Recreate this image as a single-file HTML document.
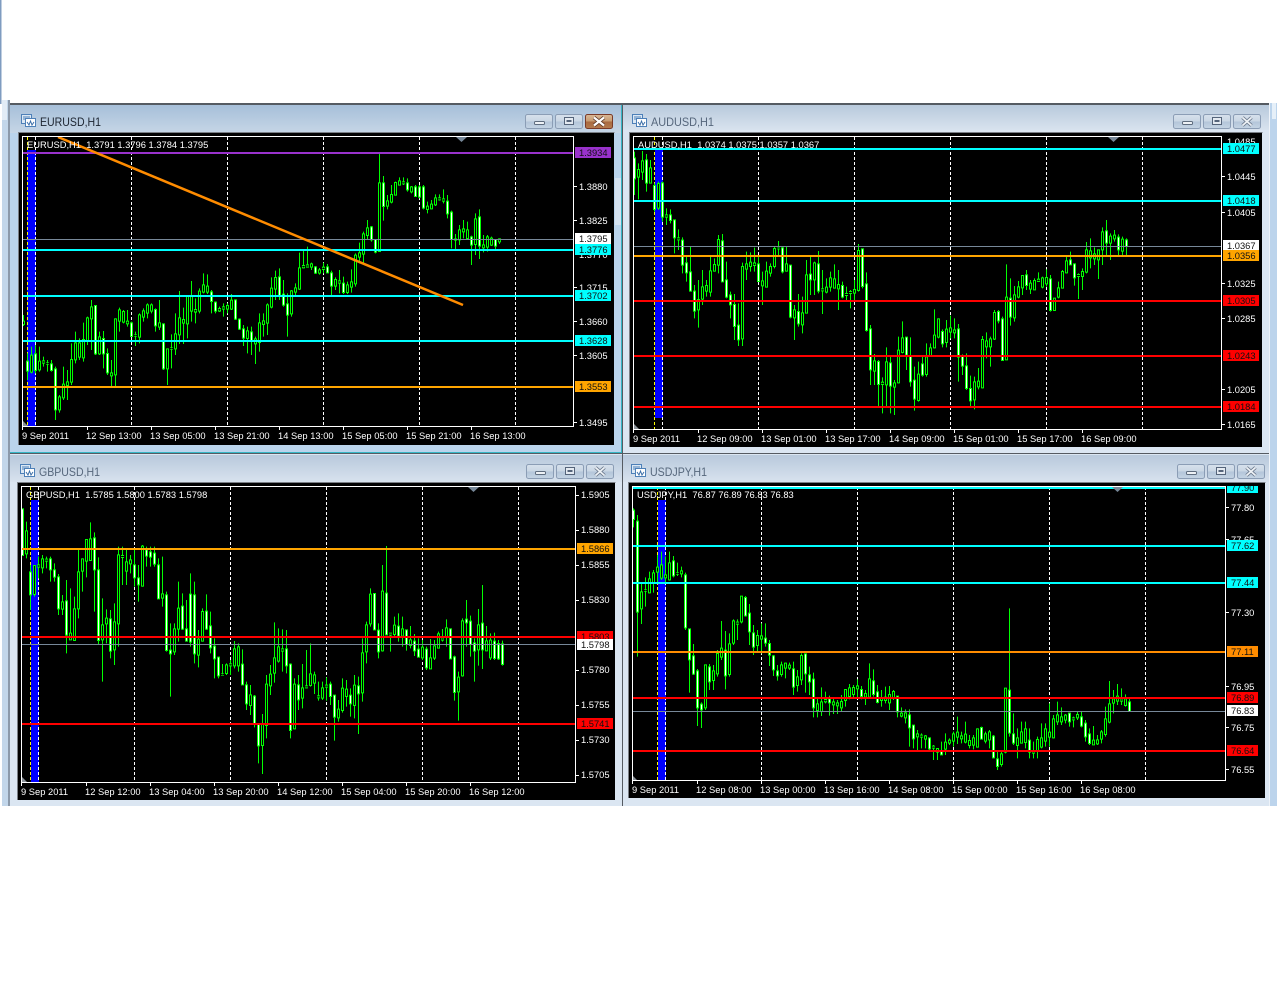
<!DOCTYPE html>
<html><head><meta charset="utf-8"><title>MT4 charts</title>
<style>
html,body{margin:0;padding:0;background:#fff;width:1278px;height:992px;overflow:hidden}
svg{display:block}
text{font-family:"Liberation Sans",Arial,sans-serif;font-size:9.35px;fill:#fff}
.t{font-size:12px;fill:#56677c}
.a{fill:#111}
.l{fill:#111}
.c{shape-rendering:crispEdges;fill:none}
</style></head><body>
<svg xmlns="http://www.w3.org/2000/svg" width="1278" height="992" viewBox="0 0 1278 992">
<defs>
<linearGradient id="ta" x1="0" y1="0" x2="0" y2="1"><stop offset="0" stop-color="#a6bfd9"/><stop offset="1" stop-color="#c6d6e6"/></linearGradient>
<linearGradient id="ti" x1="0" y1="0" x2="0" y2="1"><stop offset="0" stop-color="#b8c9dc"/><stop offset="1" stop-color="#d8e2ee"/></linearGradient>
<linearGradient id="bg" x1="0" y1="0" x2="0" y2="1"><stop offset="0" stop-color="#d7e1ec"/><stop offset=".5" stop-color="#c9d6e4"/><stop offset=".5" stop-color="#b3c5d9"/><stop offset="1" stop-color="#c5d4e4"/></linearGradient>
<linearGradient id="br" x1="0" y1="0" x2="0" y2="1"><stop offset="0" stop-color="#d9b998"/><stop offset=".5" stop-color="#c69a70"/><stop offset=".5" stop-color="#a8683f"/><stop offset="1" stop-color="#b47c50"/></linearGradient>
<g id="ic"><rect x=".5" y=".5" width="10" height="9" fill="#dce8f4" stroke="#4d80b8"/><path d="M2 3h7M2 5h7" stroke="#4d80b8"/><rect x="4.5" y="4.5" width="10" height="8" fill="#fff" stroke="#4d80b8"/><path d="M6 8l2 3 1.500-4 1.500 4 2-3" fill="none" stroke="#3a6ea8"/></g>
<g id="b1"><rect x=".5" y=".5" width="27" height="14" rx="2" fill="url(#bg)" stroke="#8b9db5"/><rect x="9.500" y="7.500" width="10" height="3" rx="1" fill="#eef2f6" stroke="#5e6c7e"/></g>
<g id="b2"><rect x=".5" y=".5" width="27" height="14" rx="2" fill="url(#bg)" stroke="#8b9db5"/><rect x="9.500" y="3.500" width="9" height="7" fill="#e4eaf1" stroke="#55647a"/><rect x="11.500" y="6" width="5" height="2" fill="#55647a"/></g>
<g id="b3"><rect x=".5" y=".5" width="27" height="14" rx="2" fill="url(#bg)" stroke="#8b9db5"/><path d="M9.500 3.500l9 8M18.500 3.500l-9 8" stroke="#6d7b8e" stroke-width="3.500"/><path d="M9.500 3.500l9 8M18.500 3.500l-9 8" stroke="#eef2f6" stroke-width="1.800"/></g>
<g id="b4"><rect x=".5" y=".5" width="27" height="14" rx="2" fill="url(#br)" stroke="#7a3a28"/><path d="M9 3.500l10 8M19 3.500l-10 8" stroke="#5e3a2a" stroke-width="3.800"/><path d="M9 3.500l10 8M19 3.500l-10 8" stroke="#fff" stroke-width="2.200"/></g>

<path id="e1w" d="M1 665V692M3 643V690M7 673V690M8 688V808M18 498V640M20 597V640M21 642V697M27 550V588M33 510V556M35 553V685M47 457V483M48 488V512M53 481V536M54 539V566M55 568V593M57 577V600M64 412V466M65 464V494M66 493V524M73 382V398M76 382V397M77 400V437M80 431V456M87 262V298M88 300V335M90 130V198M96 130V148M98 142V168M99 142V170M100 142V203M106 185V220M107 218V297M112 292V314M114 232V317M118 300V317"/>
<path id="e1b" d="M0 545V552M2 647V695M4 665V688M5 664V668M6 670V672M9 772V808M10 734V772M11 727V735M12 660V725M13 610V658M14 610V650M15 600V652M16 535V600M17 502V535M19 592V640M22 700V706M23 538V703M24 511V542M25 516V545M26 545V550M28 586V588M29 526V590M30 514V530M31 496V518M32 496V512M34 550V560M36 628V685M37 624V626M38 583V625M39 535V583M40 540V548M41 470V550M42 470V512M43 510V515M44 455V512M45 436V455M46 440V455M49 507V512M50 502V506M51 498V506M52 482V506M56 574V594M58 598V610M59 550V606M60 544V552M61 496V548M62 446V500M63 414V446M67 454V520M68 445V455M69 385V446M70 378V382M71 376V380M72 373V380M74 391V398M75 383V387M78 420V437M79 424V428M81 436V456M82 427V440M83 347V430M84 340V350M85 283V341M86 265V285M89 130V333M91 184V197M92 165V185M93 129V164M94 124V134M95 127V130M97 142V154M101 200V207M102 194V205M103 175V193M104 175V178M105 178V182M108 298V300M109 271V298M110 268V274M111 271V294M113 238V312M115 316V322M116 292V320M117 296V314M119 298V304"/>

<path id="a1w" d="M0 55V115M3 61V128M5 138V207M7 130V230M9 226V240M10 241V292M12 302V374M13 370V397M14 397V452M15 455V512M22 304V424M23 421V470M24 466V493M25 495V558M26 557V598M31 373V423M37 325V394M39 377V530M41 516V550M44 404V418M46 373V452M52 438V470M57 328V438M58 433V570M59 568V688M61 666V732M64 670V737M68 593V644M69 648V724M70 722V776M72 673V704M77 576V610M81 568V650M82 650V677M83 679V744M84 747V781M91 516V541M92 538V660M94 476V530M98 406V435M104 418V510M109 361V373M110 373V412M118 274V308M121 293V328M123 301V318"/>
<path id="a1b" d="M1 90V110M2 64V95M4 85V128M6 132V203M8 226V230M11 295V298M16 480V508M17 442V476M18 438V452M19 394V455M20 375V392M21 300V374M27 381V595M28 373V386M29 368V378M30 370V375M32 424V436M33 395V440M34 381V398M35 327V378M36 323V325M38 373V392M40 511V532M42 520V553M43 406V518M45 370V418M47 448V451M48 443V455M49 415V440M50 418V443M51 435V445M53 462V465M54 456V459M55 450V458M56 333V450M60 664V692M62 728V732M63 667V733M65 730V740M66 632V727M67 595V636M71 704V780M73 652V702M74 625V645M75 587V622M76 538V590M78 569V606M79 565V575M80 571V577M85 727V778M86 725V739M87 600V742M88 604V619M89 598V619M90 519V596M93 473V658M95 466V532M96 442V470M97 408V442M99 431V446M100 423V448M101 419V423M102 415V440M103 414V430M105 476V510M106 445V470M107 396V443M108 364V397M111 405V408M112 396V408M113 331V395M114 334V352M115 343V355M116 331V358M117 277V328M119 290V308M120 287V295M122 299V332"/>

<path id="g1w" d="M0 58V195M2 247V313M7 208V238M8 241V260M9 262V355M11 334V434M18 145V238M19 241V450M22 388V482M28 226V262M29 265V283M31 181V197M32 187V200M33 191V221M34 226V325M36 316V480M37 482V490M40 350V416M41 418V452M42 314V455M43 316V490M46 365V416M47 409V472M48 470V505M49 503V556M55 524V583M56 586V640M58 620V700M59 705V766M66 478V526M67 524V720M69 586V628M77 584V618M78 617V680M82 617V640M84 589V610M88 312V418M89 422V484M91 311V433M94 410V437M96 421V462M98 455V481M99 479V500M101 479V532M107 418V505M108 502V606M111 389V397M112 395V462M113 460V482M115 401V478M118 455V504M119 462V505M120 463V522"/>
<path id="g1b" d="M1 124V190M3 228V312M4 226V230M5 208V232M6 209V212M10 337V356M12 431V448M13 358V450M14 247V355M15 208V242M16 150V212M17 148V210M20 406V448M21 386V400M23 397V478M24 196V400M25 198V201M26 217V242M27 211V220M30 170V287M35 313V323M38 418V484M39 356V416M44 449V494M45 366V452M50 553V555M51 526V549M52 523V526M53 478V526M54 472V526M57 616V645M60 705V765M61 584V705M62 554V586M63 505V548M64 472V512M65 478V482M68 584V715M70 595V623M71 589V592M72 553V585M73 556V578M74 619V622M75 595V623M76 587V590M79 659V682M80 596V660M81 599V618M83 587V645M85 490V607M86 406V484M87 314V400M90 305V481M92 431V434M93 407V432M95 418V437M97 451V465M100 473V502M102 505V535M103 469V503M104 433V473M105 445V449M106 415V440M109 563V604M110 394V556M114 406V478M116 454V481M117 452V502"/>

<path id="j1w" d="M0 62V87M1 95V365M10 214V256M13 256V412M14 418V508M15 499V551M16 544V652M17 644V658M19 532V574M23 482V556M28 324V376M29 371V424M30 430V470M33 446V458M34 462V494M35 499V538M36 544V556M40 538V590M43 493V550M44 556V574M45 569V652M49 628V637M57 600V618M60 574V612M61 607V636M66 620V664M69 676V712M70 707V745M74 745V775M77 785V793M87 714V746M90 740V802M91 808V828M94 602V728M95 733V758M99 752V785M109 671V694M112 682V707M113 701V739M114 733V759M124 637V663"/>
<path id="j1b" d="M2 307V355M3 300V302M4 268V307M5 250V276M6 233V245M7 226V263M8 256V262M9 220V268M11 250V252M12 244V250M18 526V652M20 544V570M21 492V550M22 476V500M24 463V552M25 394V458M26 398V401M27 320V394M31 438V465M32 439V446M37 526V552M38 521V533M39 527V533M41 562V585M42 498V568M46 643V660M47 637V663M48 630V634M50 637V643M51 640V646M52 636V652M53 600V630M54 595V618M55 594V612M56 589V595M58 612V620M59 568V620M62 624V630M63 623V630M64 615V637M65 606V622M67 671V677M68 670V682M71 733V739M72 737V740M73 739V746M75 770V773M76 777V785M78 758V776M79 752V758M80 733V752M81 728V740M82 739V745M83 734V755M84 753V765M85 745V764M86 718V770M88 733V752M89 727V748M92 793V822M93 596V785M96 745V765M97 727V758M98 718V756M100 784V788M101 750V780M102 745V770M103 718V752M104 728V740M105 688V742M106 676V694M107 682V694M108 677V689M110 685V688M111 675V682M115 752V763M116 751V760M117 727V746M118 688V732M119 643V695M120 628V638M121 620V632M122 628V632M123 628V645"/>
</defs>

<!-- outer strips -->
<rect x="0" y="0" width="1.500" height="104" fill="#7f9cc0"/>
<rect x="2" y="100" width="8" height="706" fill="#c2d6ea"/>
<rect x="8" y="100" width="2" height="706" fill="#8b99aa"/>
<rect x="2" y="100" width="5" height="20" fill="#e2ecf6"/>
<rect x="1268" y="103" width="2" height="703" fill="#eef3f9"/>
<rect x="1270" y="103" width="7" height="703" fill="#bcd4ec"/>
<rect x="1272" y="103" width="4" height="16" fill="#e6f0f9"/>
<rect x="10" y="103" width="1259" height="2" fill="#555b62"/>

<!-- EURUSD window -->
<rect x="10" y="105" width="612" height="348" fill="#bad4ec"/>
<rect x="10" y="105" width="612" height="28" fill="url(#ta)"/>
<rect x="615" y="178" width="6" height="47" fill="#d4e2f0"/>
<path d="M621.500 105V453M10 452.500H622" stroke="#35b6c6" class="c"/>
<use href="#ic" x="21" y="114"/>
<text class="t" x="40" y="126" textLength="61" lengthAdjust="spacingAndGlyphs" style="fill:#1c2430">EURUSD,H1</text>
<use href="#b1" x="525" y="114"/><use href="#b2" x="555" y="114"/><use href="#b4" x="585" y="114"/>
<rect x="19" y="133" width="595" height="312" fill="#000"/>
<path d="M18.500 445V132.500H614.500" stroke="#7a7f86" class="c"/>
<rect x="27" y="150" width="9" height="276" fill="#0000ff"/>
<path d="M131.500 137V426M227.500 137V426M323.500 137V426M419.500 137V426M515.500 137V426M35.500 137V426" stroke="#fff" stroke-dasharray="3 2" class="c"/>
<path d="M27.500 137V426" stroke="#ff0" stroke-dasharray="3 2" class="c"/>
<g transform="translate(23.500 140) scale(4 .33333)" fill="none" class="c" shape-rendering="crispEdges">
<path stroke="#0f0" stroke-width=".25" d="M0 525V558M1 640V720M2 620V700M3 615V700M4 620V695M5 650V680M6 660V695M7 660V695M8 680V840M9 765V818M10 680V780M11 690V780M12 610V735M13 575V670M14 595V660M15 548V665M16 530V615M17 480V630M18 495V645M19 575V645M20 573V685M21 625V705M22 660V738M23 535V738M24 503V575M25 510V550M26 510V560M27 545V590M28 575V618M29 520V610M30 505V545M31 490V535M32 490V520M33 505V575M34 480V570M35 550V690M36 628V735M37 583V685M38 520V645M39 453V612M40 503V612M41 465V595M42 423V545M43 475V550M44 445V520M45 400V460M46 403V462M47 450V520M48 484V520M49 500V516M50 490V530M51 490V520M52 462V510M53 478V540M54 535V570M55 555V618M56 560V640M57 560V645M58 590V672M59 520V635M60 520V590M61 490V585M62 412V505M63 392V480M64 385V480M65 420V500M66 460V590M67 450V530M68 430V470M69 338V450M70 330V385M71 320V380M72 368V390M73 378V402M74 384V404M75 368V400M76 372V400M77 392V465M78 412V450M79 390V460M80 410V462M81 425V462M82 388V458M83 340V440M84 308V370M85 275V370M86 240V300M87 258V305M88 298V340M89 42V335M90 108V242M91 165V208M92 135V190M93 125V165M94 112V135M95 112V135M96 115V155M97 138V160M98 135V170M99 135V175M100 135V208M101 185V220M102 180V208M103 163V198M104 163V182M105 148V190M106 165V235M107 212V325M108 282V327M109 255V315M110 240V295M111 245V295M112 287V375M113 220V345M114 208V357M115 285V337M116 285V335M117 290V318M118 297V327M119 295V312"/>
<g stroke="#0f0" stroke-width=".75"><use href="#e1w" y="-3"/><use href="#e1w" y="3"/><use href="#e1b" y="-3"/><use href="#e1b" y="3"/></g>
<use href="#e1w" stroke="#fff" stroke-width=".25"/><use href="#e1b" stroke="#000" stroke-width=".25"/>
</g>
<g class="c" stroke-width="2"><path d="M23 153H573" stroke="#9932cc"/><path d="M23 250H573M23 296H573M23 341H573" stroke="#0ff"/><path d="M23 387H573" stroke="#ffa500"/></g>
<path d="M23 239.500H573" stroke="#778899" class="c"/>
<path d="M58 137L463 305" stroke="#ff8c00" stroke-width="2.500" fill="none"/>
<path d="M456 137h11l-5.500 5z" fill="#778899"/><path d="M23 421l5 5h-5z" fill="#8a9198"/>
<path d="M22.500 136.500H573.500V426.500H22.500Z" stroke="#fff" class="c"/>
<path d="M87.500 427v3M151.500 427v3M215.500 427v3M279.500 427v3M343.500 427v3M407.500 427v3M471.500 427v3M22.500 427v3M574 186.500h3M574 220.500h3M574 287.500h3M574 321.500h3M574 355.500h3M574 422.500h3" stroke="#fff" class="c"/>
<text x="27" y="148">EURUSD,H1&#160;&#160;1.3791 1.3796 1.3784 1.3795</text>
<g><text x="579" y="190">1.3880</text><text x="579" y="224">1.3825</text><text x="579" y="258">1.3770</text><text x="579" y="291">1.3715</text><text x="579" y="325">1.3660</text><text x="579" y="359">1.3605</text><text x="579" y="426">1.3495</text></g>
<rect x="575" y="147" width="36" height="11" fill="#9932cc"/><text class="l" x="579" y="156">1.3934</text>
<rect x="575" y="233" width="36" height="11" fill="#fff"/><text class="l" x="579" y="242">1.3795</text>
<rect x="575" y="244" width="36" height="11" fill="#0ff"/><text class="l" x="579" y="253">1.3776</text>
<rect x="575" y="290" width="36" height="11" fill="#0ff"/><text class="l" x="579" y="299">1.3702</text>
<rect x="575" y="335" width="36" height="11" fill="#0ff"/><text class="l" x="579" y="344">1.3628</text>
<rect x="575" y="381" width="36" height="11" fill="#ffa500"/><text class="l" x="579" y="390">1.3553</text>
<g><text x="22" y="439">9 Sep 2011</text><text x="86" y="439">12 Sep 13:00</text><text x="150" y="439">13 Sep 05:00</text><text x="214" y="439">13 Sep 21:00</text><text x="278" y="439">14 Sep 13:00</text><text x="342" y="439">15 Sep 05:00</text><text x="406" y="439">15 Sep 21:00</text><text x="470" y="439">16 Sep 13:00</text></g>

<!-- AUDUSD window -->
<rect x="622" y="105" width="647" height="348" fill="#dbe6f2"/>
<rect x="622" y="105" width="647" height="25" fill="url(#ti)"/>
<path d="M622.500 105V453" stroke="#555b62" class="c"/>
<use href="#ic" x="632" y="114"/>
<text class="t" x="651" y="126" textLength="63" lengthAdjust="spacingAndGlyphs">AUDUSD,H1</text>
<use href="#b1" x="1173" y="114"/><use href="#b2" x="1203" y="114"/><use href="#b3" x="1233" y="114"/>
<rect x="630" y="133" width="632" height="314" fill="#000"/>
<path d="M629.500 447V132.500H1262.500" stroke="#7a7f86" class="c"/>
<rect x="655" y="150" width="8" height="268" fill="#0000ff"/>
<path d="M662.500 137V429M758.500 137V429M854.500 137V429M950.500 137V429M1046.500 137V429M1142.500 137V429" stroke="#fff" stroke-dasharray="3 2" class="c"/>
<path d="M654.500 137V429" stroke="#ff0" stroke-dasharray="3 2" class="c"/>
<g transform="translate(634.500 140) scale(4 .33333)" fill="none" shape-rendering="crispEdges">
<path stroke="#0f0" stroke-width=".25" d="M0 35V165M1 70V178M2 33V120M3 42V155M4 60V130M5 130V215M6 125V210M7 125V245M8 205V255M9 208V250M10 240V340M11 268V330M12 292V400M13 348V425M14 320V455M15 435V535M16 420V563M17 390V495M18 420V470M19 350V470M20 355V395M21 285V400M22 282V425M23 365V475M24 455V535M25 462V600M26 490V618M27 368V618M28 335V420M29 337V395M30 323V395M31 350V425M32 395V495M33 365V440M34 370V410M35 320V385M36 303V345M37 320V400M38 320V395M39 375V535M40 495V600M41 462V560M42 470V580M43 360V520M44 350V465M45 365V465M46 333V460M47 390V522M48 415V460M49 395V455M50 373V445M51 390V510M52 425V475M53 440V480M54 450V505M55 420V480M56 312V455M57 325V445M58 397V575M59 555V735M60 642V735M61 660V798M62 712V820M63 622V798M64 650V820M65 720V825M66 590V730M67 544V640M68 592V690M69 592V740M70 680V812M71 665V785M72 650V710M73 610V710M74 610V650M75 508V625M76 535V595M77 568V622M78 540V622M79 527V595M80 535V595M81 552V725M82 643V705M83 640V750M84 707V798M85 710V808M86 684V748M87 588V745M88 577V655M89 590V680M90 510V600M91 510V550M92 530V660M93 373V660M94 415V557M95 438V545M96 423V475M97 405V465M98 390V450M99 420V462M100 415V450M101 397V425M102 410V445M103 388V440M104 405V515M105 475V512M106 425V475M107 390V445M108 348V400M109 335V375M110 370V437M111 400V477M112 385V450M113 306V400M114 295V385M115 322V375M116 330V417M117 262V375M118 240V345M119 280V360M120 270V305M121 283V345M122 290V345M123 295V345"/>
<g stroke="#0f0" stroke-width=".75"><use href="#a1w" y="-3"/><use href="#a1w" y="3"/><use href="#a1b" y="-3"/><use href="#a1b" y="3"/></g>
<use href="#a1w" stroke="#fff" stroke-width=".25"/><use href="#a1b" stroke="#000" stroke-width=".25"/>
</g>
<g class="c" stroke-width="2"><path d="M634 149H1221M634 201H1221" stroke="#0ff"/><path d="M634 256H1221" stroke="#ffa500"/><path d="M634 301H1221M634 356H1221M634 407H1221" stroke="#f00"/></g>
<path d="M634 246.500H1221" stroke="#778899" class="c"/>
<path d="M1108 137h11l-5.500 5z" fill="#778899"/><path d="M634 424l5 5h-5z" fill="#8a9198"/>
<path d="M633.500 136.500H1221.500V429.500H633.500Z" stroke="#fff" class="c"/>
<path d="M698.500 430v3M762.500 430v3M826.500 430v3M890.500 430v3M954.500 430v3M1018.500 430v3M1082.500 430v3M633.500 430v3M1222 176.500h3M1222 212.500h3M1222 283.500h3M1222 318.500h3M1222 389.500h3M1222 424.500h3" stroke="#fff" class="c"/>
<text x="638" y="148">AUDUSD,H1&#160;&#160;1.0374 1.0375 1.0357 1.0367</text>
<g><text x="1227" y="145">1.0485</text><text x="1227" y="180">1.0445</text><text x="1227" y="216">1.0405</text><text x="1227" y="287">1.0325</text><text x="1227" y="322">1.0285</text><text x="1227" y="393">1.0205</text><text x="1227" y="428">1.0165</text></g>
<rect x="1223" y="143" width="36" height="11" fill="#0ff"/><text class="l" x="1227" y="152">1.0477</text>
<rect x="1223" y="195" width="36" height="11" fill="#0ff"/><text class="l" x="1227" y="204">1.0418</text>
<rect x="1223" y="240" width="36" height="11" fill="#fff"/><text class="l" x="1227" y="249">1.0367</text>
<rect x="1223" y="250" width="36" height="11" fill="#ffa500"/><text class="l" x="1227" y="259">1.0356</text>
<rect x="1223" y="295" width="36" height="11" fill="#f00"/><text class="l" x="1227" y="304">1.0305</text>
<rect x="1223" y="350" width="36" height="11" fill="#f00"/><text class="l" x="1227" y="359">1.0243</text>
<rect x="1223" y="401" width="36" height="11" fill="#f00"/><text class="l" x="1227" y="410">1.0184</text>
<g><text x="633" y="442">9 Sep 2011</text><text x="697" y="442">12 Sep 09:00</text><text x="761" y="442">13 Sep 01:00</text><text x="825" y="442">13 Sep 17:00</text><text x="889" y="442">14 Sep 09:00</text><text x="953" y="442">15 Sep 01:00</text><text x="1017" y="442">15 Sep 17:00</text><text x="1081" y="442">16 Sep 09:00</text></g>

<!-- GBPUSD window -->
<rect x="10" y="453" width="612" height="353" fill="#dbe6f2"/>
<rect x="10" y="455" width="612" height="27" fill="url(#ti)"/>
<path d="M10 453.500H622" stroke="#555b62" class="c"/>
<use href="#ic" x="20" y="464"/>
<text class="t" x="39" y="476" textLength="61" lengthAdjust="spacingAndGlyphs">GBPUSD,H1</text>
<use href="#b1" x="526" y="464"/><use href="#b2" x="556" y="464"/><use href="#b3" x="586" y="464"/>
<rect x="18" y="483" width="597" height="317" fill="#000"/>
<path d="M17.500 800V482.500H615.500" stroke="#7a7f86" class="c"/>
<rect x="31" y="500" width="8" height="282" fill="#0000ff"/>
<path d="M38.500 487V782M134.500 487V782M230.500 487V782M326.500 487V782M422.500 487V782M518.500 487V782" stroke="#fff" stroke-dasharray="3 2" class="c"/>
<path d="M30.500 487V782" stroke="#ff0" stroke-dasharray="3 2" class="c"/>
<g transform="translate(22.500 490) scale(4 .33333)" fill="none" shape-rendering="crispEdges">
<path stroke="#0f0" stroke-width=".25" d="M0 55V195M1 95V205M2 225V360M3 225V320M4 200V265M5 195V250M6 200V235M7 200V275M8 220V275M9 252V375M10 315V375M11 270V490M12 295V450M13 320V450M14 180V385M15 205V305M16 148V262M17 97V210M18 127V365M19 202V465M20 325V575M21 358V460M22 360V505M23 340V525M24 170V470M25 170V285M26 180V285M27 195V250M28 175V290M29 225V335M30 165V290M31 170V230M32 170V230M33 170V230M34 205V325M35 200V350M36 305V485M37 400V620M38 400V495M39 275V455M40 310V420M41 330V455M42 250V470M43 275V520M44 420V532M45 355V455M46 313V420M47 365V490M48 445V565M49 500V565M50 522V555M51 520V555M52 510V555M53 453V535M54 460V545M55 478V585M56 575V660M57 585V675M58 615V712M59 705V820M60 672V852M61 555V745M62 525V615M63 397V578M64 415V518M65 418V545M66 420V550M67 520V745M68 565V718M69 555V660M70 522V655M71 480V595M72 460V590M73 545V612M74 575V632M75 575V630M76 562V632M77 575V645M78 618V752M79 630V695M80 565V668M81 570V650M82 595V680M83 555V685M84 560V732M85 445V635M86 395V520M87 295V410M88 310V420M89 400V505M90 225V485M91 168V435M92 430V485M93 380V440M94 370V455M95 380V470M96 420V482M97 408V475M98 432V498M99 445V500M100 450V510M101 470V540M102 447V537M103 450V510M104 425V475M105 417V455M106 388V470M107 415V505M108 497V632M109 545V692M110 385V560M111 330V470M112 377V500M113 445V575M114 357V527M115 285V537M116 408V480M117 430V510M118 428V510M119 450V510M120 452V527"/>
<g stroke="#0f0" stroke-width=".75"><use href="#g1w" y="-3"/><use href="#g1w" y="3"/><use href="#g1b" y="-3"/><use href="#g1b" y="3"/></g>
<use href="#g1w" stroke="#fff" stroke-width=".25"/><use href="#g1b" stroke="#000" stroke-width=".25"/>
</g>
<g class="c" stroke-width="2"><path d="M22 549H575" stroke="#ffa500"/><path d="M22 637H575M22 724H575" stroke="#f00"/></g>
<path d="M22 644.500H575" stroke="#778899" class="c"/>
<path d="M468 487h11l-5.500 5z" fill="#778899"/><path d="M22 777l5 5h-5z" fill="#8a9198"/>
<path d="M21.500 486.500H575.500V782.500H21.500Z" stroke="#fff" class="c"/>
<path d="M86.500 783v3M150.500 783v3M214.500 783v3M278.500 783v3M342.500 783v3M406.500 783v3M470.500 783v3M21.500 783v3M576 495.500h3M576 530.500h3M576 565.500h3M576 600.500h3M576 670.500h3M576 705.500h3M576 740.500h3M576 775.500h3" stroke="#fff" class="c"/>
<text x="26" y="498">GBPUSD,H1&#160;&#160;1.5785 1.5800 1.5783 1.5798</text>
<g><text x="581" y="498">1.5905</text><text x="581" y="533">1.5880</text><text x="581" y="568">1.5855</text><text x="581" y="603">1.5830</text><text x="581" y="673">1.5780</text><text x="581" y="708">1.5755</text><text x="581" y="743">1.5730</text><text x="581" y="778">1.5705</text></g>
<rect x="577" y="543" width="36" height="11" fill="#ffa500"/><text class="l" x="581" y="552">1.5866</text>
<rect x="577" y="631" width="36" height="11" fill="#f00"/><text class="l" x="581" y="640">1.5803</text>
<rect x="577" y="639" width="36" height="11" fill="#fff"/><text class="l" x="581" y="648">1.5798</text>
<rect x="577" y="718" width="36" height="11" fill="#f00"/><text class="l" x="581" y="727">1.5741</text>
<g><text x="21" y="795">9 Sep 2011</text><text x="85" y="795">12 Sep 12:00</text><text x="149" y="795">13 Sep 04:00</text><text x="213" y="795">13 Sep 20:00</text><text x="277" y="795">14 Sep 12:00</text><text x="341" y="795">15 Sep 04:00</text><text x="405" y="795">15 Sep 20:00</text><text x="469" y="795">16 Sep 12:00</text></g>

<!-- USDJPY window -->
<rect x="622" y="453" width="647" height="353" fill="#dbe6f2"/>
<rect x="622" y="455" width="647" height="27" fill="url(#ti)"/>
<path d="M622 453.500H1269M622.500 453V806" stroke="#555b62" class="c"/>
<use href="#ic" x="631" y="464"/>
<text class="t" x="650" y="476" textLength="57" lengthAdjust="spacingAndGlyphs">USDJPY,H1</text>
<use href="#b1" x="1177" y="464"/><use href="#b2" x="1207" y="464"/><use href="#b3" x="1237" y="464"/>
<rect x="629" y="483" width="636" height="315" fill="#000"/>
<path d="M628.500 798V482.500H1265.500" stroke="#7a7f86" class="c"/>
<rect x="658" y="500" width="8" height="280" fill="#0000ff"/>
<path d="M665.500 487V780M761.500 487V780M857.500 487V780M953.500 487V780M1049.500 487V780M1145.500 487V780" stroke="#fff" stroke-dasharray="3 2" class="c"/>
<path d="M657.500 487V780" stroke="#ff0" stroke-dasharray="3 2" class="c"/>
<g transform="translate(633.500 490) scale(4 .33333)" fill="none" shape-rendering="crispEdges">
<path stroke="#0f0" stroke-width=".25" d="M0 55V112M1 75V500M2 280V402M3 262V350M4 245V310M5 240V308M6 195V280M7 185V270M8 200V278M9 185V272M10 198V262M11 218V258M12 230V262M13 248V420M14 417V608M15 462V555M16 537V708M17 637V714M18 525V660M19 522V600M20 525V600M21 480V560M22 393V510M23 423V598M24 430V560M25 388V465M26 388V450M27 318V400M28 318V380M29 342V465M30 405V495M31 420V485M32 400V490M33 400V470M34 450V528M35 495V558M36 525V572M37 515V560M38 518V565M39 518V540M40 515V615M41 540V605M42 490V585M43 490V608M44 530V615M45 548V682M46 625V682M47 592V678M48 605V640M49 617V677M50 625V672M51 630V672M52 615V665M53 600V650M54 582V628M55 585V625M56 568V622M57 588V628M58 600V645M59 520V625M60 538V620M61 585V640M62 600V650M63 590V640M64 588V660M65 600V630M66 620V682M67 652V682M68 658V700M69 658V770M70 705V775M71 720V780M72 730V775M73 735V775M74 742V780M75 765V810M76 775V810M77 755V795M78 730V795M79 745V765M80 725V770M81 680V762M82 725V760M83 695V760M84 735V775M85 735V778M86 715V772M87 710V748M88 725V760M89 720V775M90 735V805M91 785V840M92 780V830M93 595V790M94 355V740M95 670V765M96 715V805M97 695V760M98 695V775M99 715V805M100 755V805M101 740V805M102 700V775M103 700V770M104 640V770M105 675V745M106 635V705M107 652V705M108 672V700M109 668V710M110 680V712M111 665V690M112 665V712M113 690V755M114 715V765M115 708V765M116 735V765M117 720V760M118 650V740M119 573V700M120 600V670M121 582V645M122 595V645M123 613V650M124 625V665"/>
<g stroke="#0f0" stroke-width=".75"><use href="#j1w" y="-3"/><use href="#j1w" y="3"/><use href="#j1b" y="-3"/><use href="#j1b" y="3"/></g>
<use href="#j1w" stroke="#fff" stroke-width=".25"/><use href="#j1b" stroke="#000" stroke-width=".25"/>
</g>
<g class="c" stroke-width="2"><path d="M633 488H1226M633 546H1226M633 583H1226" stroke="#0ff"/><path d="M633 652H1226" stroke="#ff8c00"/><path d="M633 698H1226M633 751H1226" stroke="#f00"/></g>
<path d="M633 711.500H1226" stroke="#778899" class="c"/>
<path d="M1112 487h11l-5.500 5z" fill="#778899"/><path d="M632 775l5 5h-5z" fill="#8a9198"/>
<path d="M632.500 486.500H1225.500V780.500H632.500Z" stroke="#fff" class="c"/>
<path d="M697.500 781v3M761.500 781v3M825.500 781v3M889.500 781v3M953.500 781v3M1017.500 781v3M1081.500 781v3M632.500 781v3M1226 507.500h3M1226 539.500h3M1226 612.500h3M1226 686.500h3M1226 727.500h3M1226 769.500h3" stroke="#fff" class="c"/>
<text x="637" y="498">USDJPY,H1&#160;&#160;76.87 76.89 76.83 76.83</text>
<g><text x="1231" y="511">77.80</text><text x="1231" y="543">77.65</text><text x="1231" y="616">77.30</text><text x="1231" y="690">76.95</text><text x="1231" y="731">76.75</text><text x="1231" y="773">76.55</text></g>
<rect x="1227" y="483" width="31" height="10" fill="#0ff"/><text class="l" x="1231" y="491">77.90</text>
<rect x="1227" y="483" width="31" height="3" fill="#000"/>
<rect x="1227" y="540" width="31" height="11" fill="#0ff"/><text class="l" x="1231" y="549">77.62</text>
<rect x="1227" y="577" width="31" height="11" fill="#0ff"/><text class="l" x="1231" y="586">77.44</text>
<rect x="1227" y="646" width="31" height="11" fill="#ff8c00"/><text class="l" x="1231" y="655">77.11</text>
<rect x="1227" y="692" width="31" height="11" fill="#f00"/><text class="l" x="1231" y="701">76.89</text>
<rect x="1227" y="705" width="31" height="11" fill="#fff"/><text class="l" x="1231" y="714">76.83</text>
<rect x="1227" y="745" width="31" height="11" fill="#f00"/><text class="l" x="1231" y="754">76.64</text>
<g><text x="632" y="793">9 Sep 2011</text><text x="696" y="793">12 Sep 08:00</text><text x="760" y="793">13 Sep 00:00</text><text x="824" y="793">13 Sep 16:00</text><text x="888" y="793">14 Sep 08:00</text><text x="952" y="793">15 Sep 00:00</text><text x="1016" y="793">15 Sep 16:00</text><text x="1080" y="793">16 Sep 08:00</text></g>
</svg>
</body></html>
